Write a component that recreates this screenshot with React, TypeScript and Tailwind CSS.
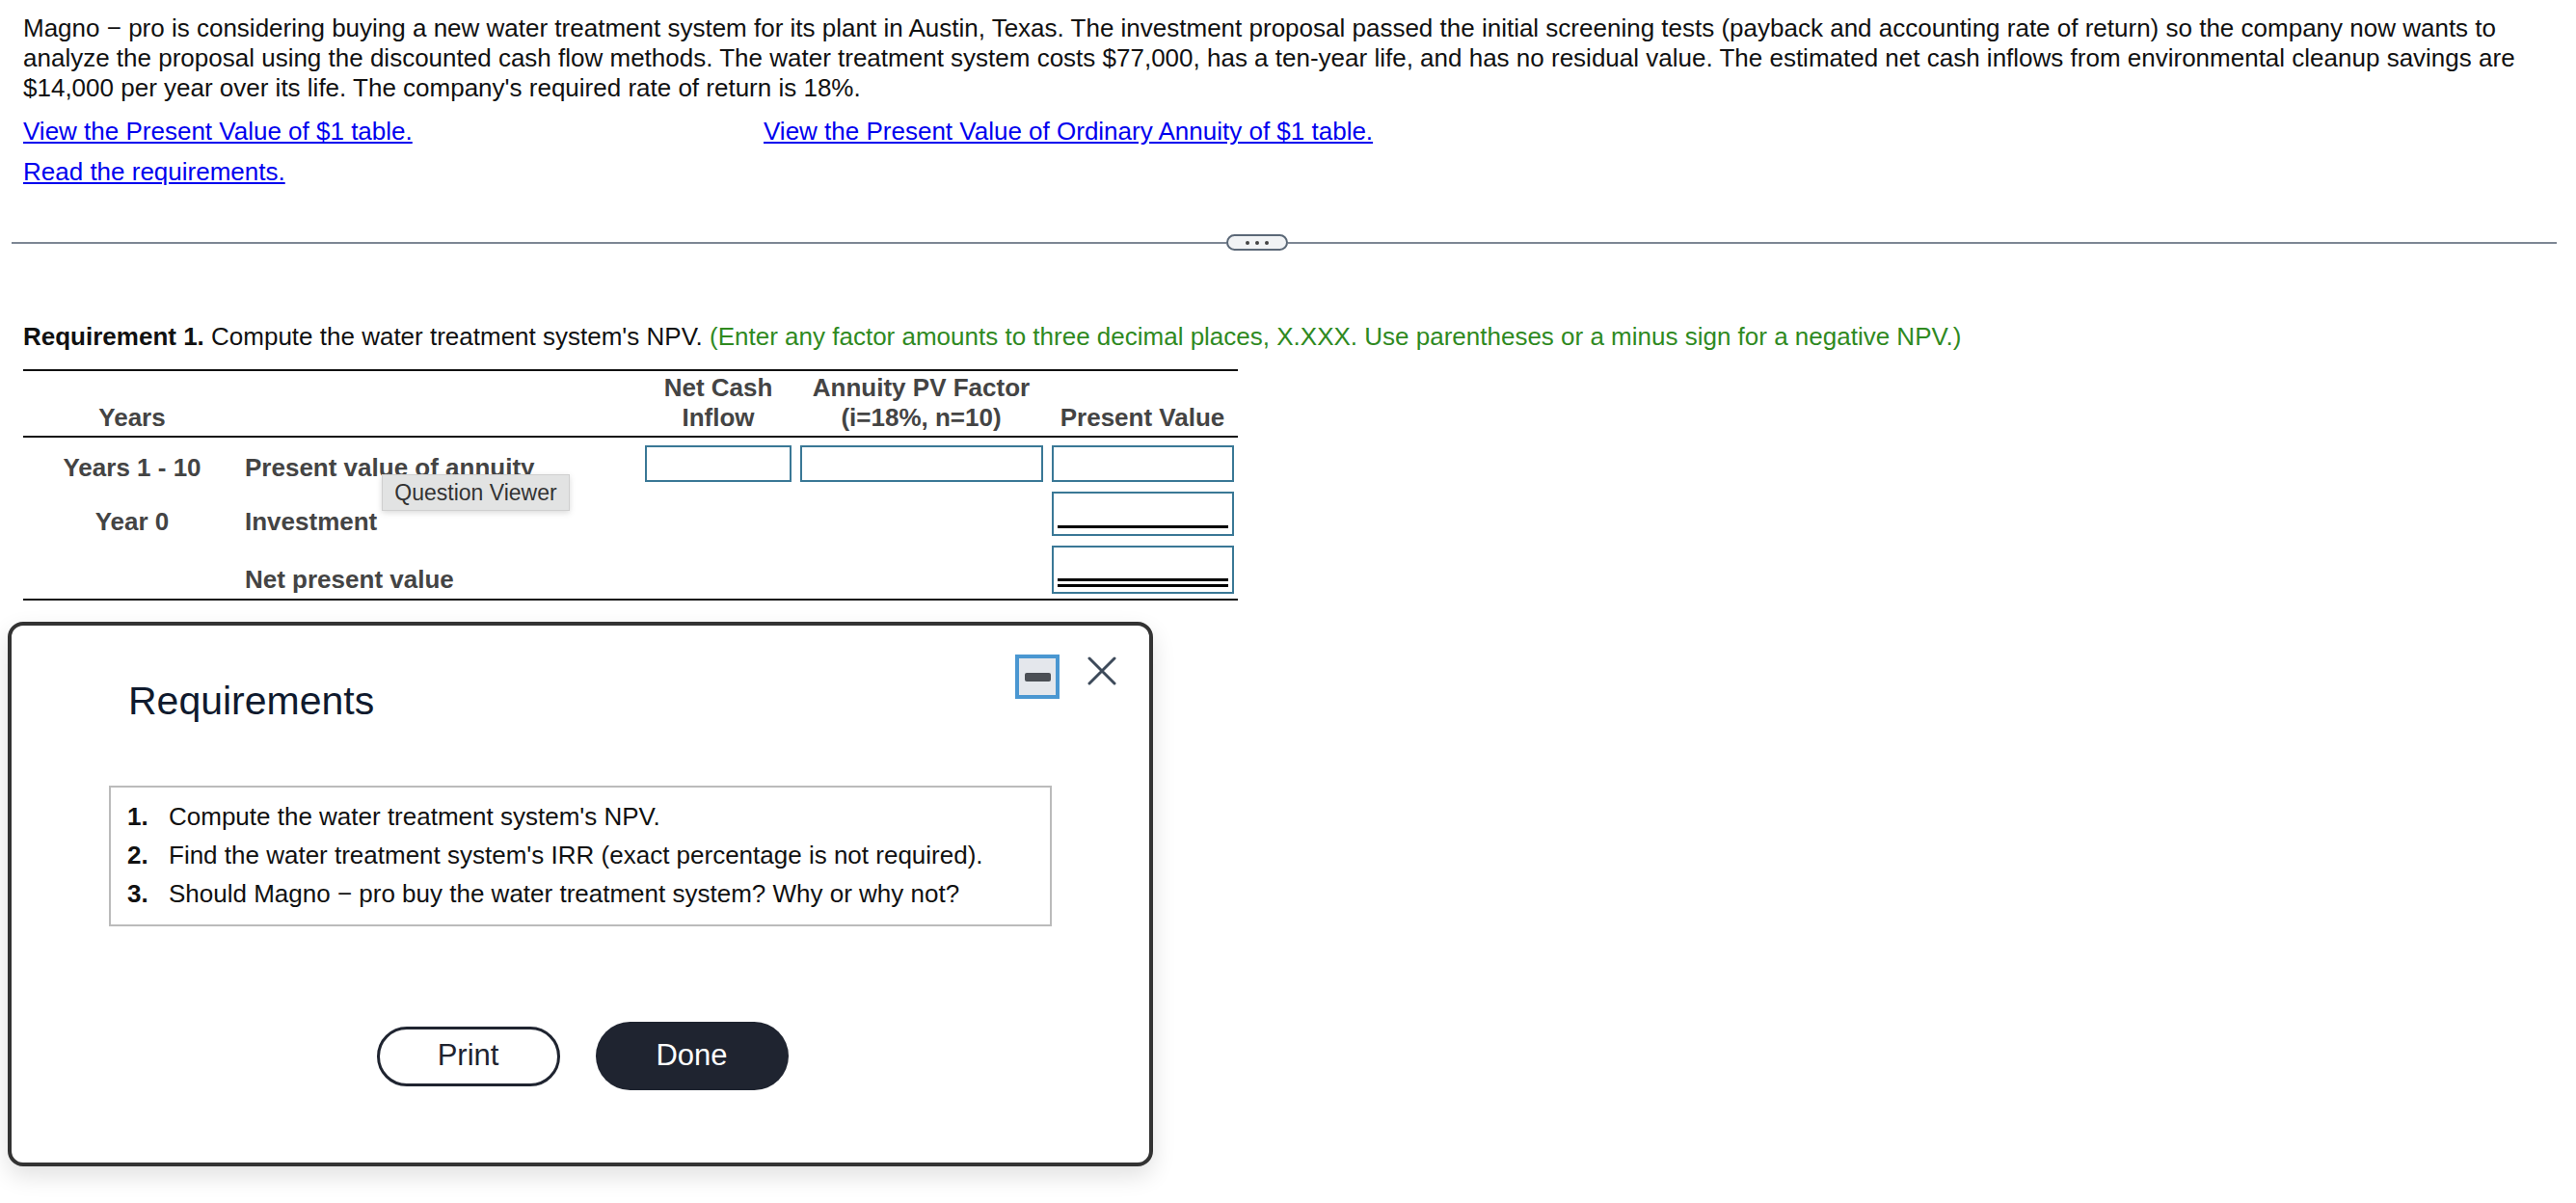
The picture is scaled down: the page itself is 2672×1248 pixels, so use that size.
import { Fragment } from "react"

const cols = "grid grid-cols-[226px_415px_160px_261px_198px]"

function Box({ h, children }: { h: string; children?: React.ReactNode }) {
  return (
    <div className={`${h} border-2 border-[#3a7896] bg-white flex flex-col justify-end px-[4px]`}>
      {children}
    </div>
  )
}

export default function App() {
  const reqs = [
    "Compute the water treatment system's NPV.",
    "Find the water treatment system's IRR (exact percentage is not required).",
    "Should Magno \u2212 pro buy the water treatment system? Why or why not?",
  ]

  return (
    <div className="relative min-h-screen bg-white font-['Liberation_Sans',Arial,sans-serif] text-[26px] text-[#111]">
      {/* Problem text */}
      <div className="pl-[24px] pr-[16px] pt-[14px]">
        <p className="leading-[31px]">
          Magno − pro is considering buying a new water treatment system for its plant in Austin, Texas. The investment
          proposal passed the initial screening tests (payback and accounting rate of return) so the company now wants to
          analyze the proposal using the discounted cash flow methods. The water treatment system costs $77,000, has a
          ten-year life, and has no residual value. The estimated net cash inflows from environmental cleanup savings are
          $14,000 per year over its life. The company's required rate of return is 18%.
        </p>
        <div className="mt-[14px] flex leading-[30px] text-[#0000ee]">
          <a href="#" className="w-[768px] underline">
            View the Present Value of $1 table.
          </a>
          <a href="#" className="underline">
            View the Present Value of Ordinary Annuity of $1 table.
          </a>
        </div>
        <div className="mt-[12px] leading-[30px]">
          <a href="#" className="underline text-[#0000ee]">
            Read the requirements.
          </a>
        </div>
      </div>

      {/* Divider */}
      <div className="mt-[50px] ml-[12px] mr-[20px] flex items-center h-[17px]">
        <div className="w-[1260px] h-[2px] bg-[#7d8794]" />
        <div className="w-[64px] h-[17px] rounded-full border-2 border-[#5b6877] bg-[#f1f3f5] flex items-center justify-center gap-[6px]">
          <span className="w-[4px] h-[4px] rounded-full bg-[#444]" />
          <span className="w-[4px] h-[4px] rounded-full bg-[#444]" />
          <span className="w-[4px] h-[4px] rounded-full bg-[#444]" />
        </div>
        <div className="flex-1 h-[2px] bg-[#7d8794]" />
      </div>

      {/* Requirement 1 */}
      <div className="pl-[24px] mt-[74px] leading-[30px]">
        <span className="font-bold">Requirement 1.</span> Compute the water treatment system's NPV.{" "}
        <span className="text-[#2f8a1f]">
          (Enter any factor amounts to three decimal places, X.XXX. Use parentheses or a minus sign for a negative NPV.)
        </span>
      </div>

      {/* NPV table */}
      <div className="ml-[24px] mt-[19px] w-[1260px] font-bold text-[#444]">
        <div className={`${cols} items-end border-y-2 border-[#111] pt-[2px] pb-[3px] leading-[31px] text-center`}>
          <div>Years</div>
          <div />
          <div>
            Net Cash
            <br />
            Inflow
          </div>
          <div>
            Annuity PV Factor
            <br />
            (i=18%, n=10)
          </div>
          <div>Present Value</div>
        </div>
        <div className="flex flex-col gap-[10px] pt-[8px] pb-[5px] border-b-2 border-[#111] leading-[30px]">
          <div className={`${cols} items-end`}>
            <div className="text-center">Years 1 - 10</div>
            <div className="pl-[4px]">Present value of annuity</div>
            <div className="mx-[4px]">
              <Box h="h-[38px]" />
            </div>
            <div className="ml-[5px] mr-[4px]">
              <Box h="h-[38px]" />
            </div>
            <div className="ml-[5px] mr-[4px]">
              <Box h="h-[38px]" />
            </div>
          </div>
          <div className={`${cols} items-end`}>
            <div className="text-center">Year 0</div>
            <div className="pl-[4px]">Investment</div>
            <div />
            <div />
            <div className="ml-[5px] mr-[4px]">
              <Box h="h-[46px] pb-[6px]">
                <div className="h-[3px] bg-black" />
              </Box>
            </div>
          </div>
          <div className={`${cols} items-end`}>
            <div />
            <div className="pl-[4px]">Net present value</div>
            <div />
            <div />
            <div className="ml-[5px] mr-[4px]">
              <Box h="h-[50px] pb-[5px] gap-[3px]">
                <div className="h-[3px] bg-black" />
                <div className="h-[3px] bg-black" />
              </Box>
            </div>
          </div>
        </div>
      </div>

      {/* Tooltip */}
      <div className="absolute left-[396px] top-[492px] w-[195px] h-[38px] bg-[#e2e3e3] border border-[#cfcfcf] shadow-[0_2px_6px_rgba(0,0,0,0.15)] flex items-center justify-center text-[23px] text-[#333] font-normal">
        Question Viewer
      </div>

      {/* Requirements dialog */}
      <div className="absolute left-[8px] top-[645px] w-[1188px] h-[565px] bg-white border-4 border-[#333] rounded-[16px] shadow-[0_10px_24px_rgba(0,0,0,0.12)]">
        <div className="flex items-start justify-between pt-[30px] pl-[121px] pr-[34px]">
          <h2 className="mt-[24px] text-[41px] leading-[48px] text-[#0f1a2e]">Requirements</h2>
          <div className="flex items-start gap-[29px]">
            <button className="w-[46px] h-[46px] border-4 border-[#4a97d1] bg-[#e4e7ec] flex items-center justify-center">
              <span className="w-[27px] h-[9px] rounded-[2px] bg-[#4b4f55]" />
            </button>
            <svg width="30" height="30" viewBox="0 0 30 30" className="mt-[2px]">
              <path d="M2 2L28 28M28 2L2 28" stroke="#3d4a5a" strokeWidth="3" strokeLinecap="round" />
            </svg>
          </div>
        </div>

        <div className="ml-[101px] mt-[64px] w-[978px] border-2 border-[#bbb] pt-[10px] pb-[12px] pl-[17px] leading-[40px] text-[#111]">
          {reqs.map((r, i) => (
            <Fragment key={i}>
              <div className="flex">
                <span className="w-[43px] font-bold">{i + 1}.</span>
                <span>{r}</span>
              </div>
            </Fragment>
          ))}
        </div>

        <div className="mt-[99px] flex items-center justify-center gap-[37px] pl-[4px] text-[31px]">
          <button className="w-[190px] h-[62px] rounded-full border-[3px] border-[#1f2430] bg-white text-[#1f2430]">
            Print
          </button>
          <button className="w-[200px] h-[71px] rounded-full bg-[#1f2430] text-white">Done</button>
        </div>
      </div>
    </div>
  )
}
